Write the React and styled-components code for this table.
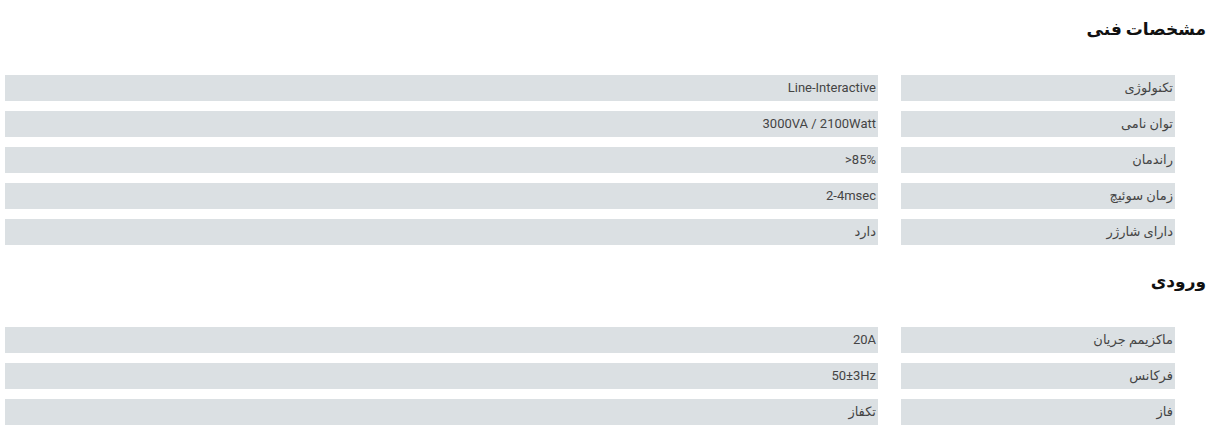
import styled, { createGlobalStyle } from "styled-components";

const GlobalStyle = createGlobalStyle`
  body {
    margin: 0;
    background: #fff;
    font-family: Roboto, "DejaVu Sans", sans-serif;
  }
`;

const specs = [
  {
    title: "مشخصات فنی",
    rows: [
      ["تکنولوژی", "Line-Interactive"],
      ["توان نامی", "3000VA / 2100Watt"],
      ["راندمان", ">85%"],
      ["زمان سوئیچ", "2-4msec"],
      ["دارای شارژر", "دارد"],
    ],
  },
  {
    title: "ورودی",
    rows: [
      ["ماکزیمم جریان", "20A"],
      ["فرکانس", "50±3Hz"],
      ["فاز", "تکفاز"],
    ],
  },
];

const Page = () => (
  <>
    <GlobalStyle />
    <Wrapper dir="rtl">
      {specs.map((section, i) => (
        <Section key={section.title} first={i === 0}>
          <Heading>{section.title}</Heading>
          <Table>
            {section.rows.map(([label, value]) => (
              <Row key={label}>
                <Cell>{label}</Cell>
                <Cell>
                  <bdi>{value}</bdi>
                </Cell>
              </Row>
            ))}
          </Table>
        </Section>
      ))}
    </Wrapper>
  </>
);

const Wrapper = styled.div`
  width: 1226px;
  padding-top: 17px;
`;

const Section = styled.section`
  margin-top: ${(props) => (props.first ? "0" : "24px")};
`;

const Heading = styled.h3`
  margin: 0;
  padding-right: 20px;
  font-family: "DejaVu Sans", sans-serif;
  font-size: 17px;
  font-weight: bold;
  line-height: 24px;
  word-spacing: -2px;
  color: #111;
`;

const Table = styled.div`
  display: flex;
  flex-direction: column;
  gap: 10px;
  margin: 34px 51px 0 5px;
`;

const Row = styled.div`
  display: grid;
  grid-template-columns: 274px 1fr;
  gap: 23px;
`;

const Cell = styled.div`
  height: 26px;
  line-height: 25px;
  padding: 0 2px;
  background: #dbe0e3;
  color: #444;
  font-size: 13px;
  white-space: nowrap;
`;

export default Page;
